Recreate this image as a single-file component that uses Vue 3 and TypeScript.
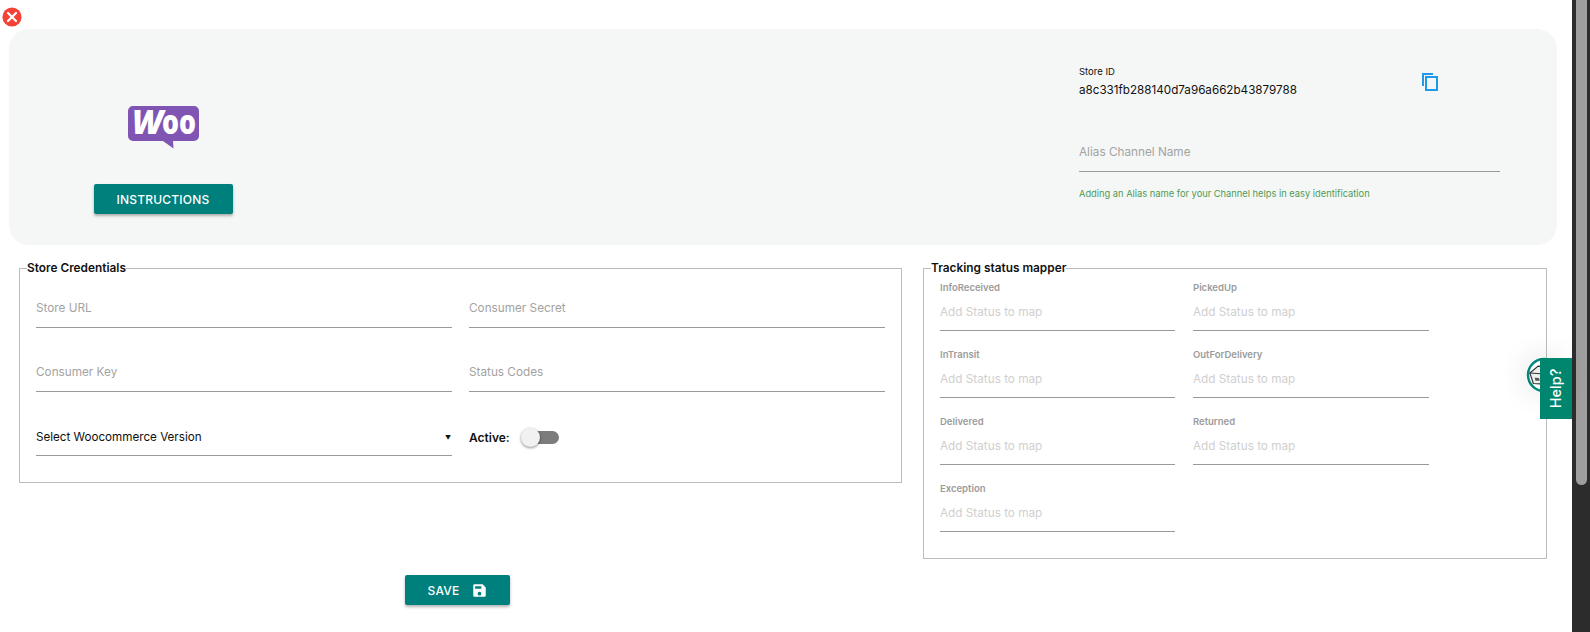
<script setup lang="ts">
const leftFields: string[] = ['Store URL', 'Consumer Secret', 'Consumer Key', 'Status Codes']
const statuses: string[] = ['InfoReceived', 'PickedUp', 'InTransit', 'OutForDelivery', 'Delivered', 'Returned', 'Exception']
</script>

<template>
  <div class="page">
    <main class="content">
      <svg class="close" viewBox="0 0 20 20" width="20" height="20" aria-label="Close">
        <circle cx="10" cy="10" r="9.6" fill="#f44336" />
        <path d="M6 6l8 8M14 6l-8 8" stroke="#fff" stroke-width="2.2" stroke-linecap="round" />
      </svg>

      <section class="card">
        <div class="brand">
          <svg class="logo" viewBox="0 0 71 43" width="71" height="43" aria-label="WooCommerce">
            <path d="M5 0h61a5 5 0 0 1 5 5v25a5 5 0 0 1-5 5H45l.5 7.500L35 35H5a5 5 0 0 1-5-5V5a5 5 0 0 1 5-5z" fill="#7f54b3" />
            <text x="4" y="28" textLength="31" lengthAdjust="spacingAndGlyphs" class="logo-text logo-w">W</text>
            <text x="34" y="28" textLength="34" lengthAdjust="spacingAndGlyphs" class="logo-text">oo</text>
          </svg>
          <button class="btn btn-instructions" type="button">INSTRUCTIONS</button>
        </div>
        <div class="store">
          <div class="store-top">
            <div>
              <div class="store-label">Store ID</div>
              <div class="store-id">a8c331fb288140d7a96a662b43879788</div>
            </div>
            <svg class="copy" viewBox="0 0 16 18" width="16" height="18" aria-label="Copy">
              <path d="M1 13V1h10" fill="none" stroke="#1e9ae8" stroke-width="2" />
              <rect x="4" y="4" width="11" height="13" fill="none" stroke="#1e9ae8" stroke-width="2" />
            </svg>
          </div>
          <input class="field alias" placeholder="Alias Channel Name" />
          <div class="hint">Adding an Alias name for your Channel helps in easy identification</div>
        </div>
      </section>

      <div class="columns">
        <div class="left-col">
          <fieldset class="box creds">
            <legend>Store Credentials</legend>
            <div class="creds-grid">
              <input v-for="f in leftFields" :key="f" class="field" :placeholder="f" />
              <div class="select">
                <span>Select Woocommerce Version</span>
                <span class="arrow">▼</span>
              </div>
              <div class="active">
                <span>Active:</span>
                <span class="switch"><span class="knob"></span></span>
              </div>
            </div>
          </fieldset>
        </div>
        <fieldset class="box mapper">
          <legend>Tracking status mapper</legend>
          <div class="mapper-grid">
            <label v-for="s in statuses" :key="s" class="status">
              <span class="status-label">{{ s }}</span>
              <input class="field status-input" placeholder="Add Status to map" />
            </label>
          </div>
        </fieldset>
      </div>

      <div class="save-row">
        <button class="btn btn-save" type="button">
          SAVE
          <svg viewBox="0 0 24 24" width="15" height="15" aria-hidden="true">
            <path fill="#fff" d="M17 2H4a2 2 0 0 0-2 2v16a2 2 0 0 0 2 2h16a2 2 0 0 0 2-2V7l-5-5zm-5 18a3 3 0 1 1 0-6 3 3 0 0 1 0 6zm3-11H5V5h10v4z" />
          </svg>
        </button>
      </div>

      <div class="help-badge">
        <svg viewBox="0 0 36 36" width="36" height="36" aria-hidden="true">
          <circle cx="18" cy="18" r="16" fill="#fff" stroke="#00897b" stroke-width="2.500" />
          <g transform="rotate(-18 14 18)">
            <path d="M5 13l10-4 10 4v11l-10 4-10-4z" fill="#eee" stroke="#333" stroke-width="1.200" />
            <path d="M5 13l10 4 10-4M15 17v11" fill="none" stroke="#333" stroke-width="1.200" />
            <path d="M8 19l4 1.500v3l-4-1.500z" fill="#555" />
          </g>
        </svg>
      </div>
      <div class="help"><span>Help?</span></div>
    </main>
    <aside class="scrollbar"><div class="thumb"></div></aside>
  </div>
</template>

<style>
html, body { margin: 0; background: #fff; overflow: hidden; }
</style>

<style scoped>
.page {
  display: flex;
  width: 1590px;
  height: 632px;
  overflow: hidden;
  font-family: Inter, "Liberation Sans", sans-serif;
  color: #111;
}
.content {
  position: relative;
  flex: 1;
  min-width: 0;
  padding: 29px 0 0 9px;
  box-sizing: border-box;
}
.close { position: absolute; left: 2px; top: 7px; }
.scrollbar {
  width: 18px;
  background: #2c2c2c;
  display: flex;
  justify-content: center;
}
.thumb {
  width: 11px;
  height: 485px;
  background: #9e9e9e;
  border-radius: 0 0 6px 6px;
}
.card {
  width: 1548px;
  height: 216px;
  background: #f5f7f6;
  border-radius: 20px;
  display: flex;
  box-sizing: border-box;
}
.brand {
  width: 308px;
  display: flex;
  flex-direction: column;
  align-items: center;
  padding-top: 77px;
  box-sizing: border-box;
}
.logo { overflow: visible; }
.logo-text {
  font-family: "Open Sans", sans-serif;
  font-weight: 800;
  font-size: 33px;
  fill: #fff;
}
.logo-w { font-style: italic; }
.btn {
  border: 0;
  border-radius: 2px;
  background: #00807d;
  color: #fff;
  font-family: Inter, sans-serif;
  font-weight: 500;
  font-size: 12px;
  letter-spacing: 0.2px;
  box-shadow: 0 2px 3px rgba(0, 0, 0, 0.3);
  display: flex;
  align-items: center;
  justify-content: center;
}
.btn-instructions {
  width: 139px;
  height: 30px;
  margin-top: 35px;
}
.store {
  margin-left: 762px;
  width: 421px;
  padding-top: 37px;
}
.store-top {
  display: flex;
  justify-content: space-between;
  width: 359px;
  height: 42px;
}
.store-label { font-size: 9.500px; line-height: 12px; }
.store-id { font-size: 11.670px; line-height: 15px; margin-top: 5px; }
.copy { margin-top: 7px; }
.field {
  display: block;
  width: 100%;
  box-sizing: border-box;
  height: 41px;
  border: 0;
  border-bottom: 1px solid #9a9a9a;
  outline: 0;
  padding: 1px 0 0;
  background: transparent;
  font-family: Inter, sans-serif;
  font-size: 11.750px;
  color: #111;
}
.field::placeholder { color: #a3a3a3; opacity: 1; }
.alias { margin-top: 21px; height: 43px; padding-top: 4px; }
.hint {
  margin-top: 16px;
  font-size: 9.300px;
  line-height: 12px;
  color: #4f9a55;
}
.columns {
  display: flex;
  align-items: flex-start;
  margin-top: 16px;
  padding-left: 10px;
}
.left-col { width: 883px; flex: none; }
.box {
  margin: 0;
  border: 1px solid #bcbcbc;
  padding: 0;
  box-sizing: border-box;
}
.box legend {
  margin-left: 7px;
  padding: 0;
  font-size: 11.850px;
  font-weight: 600;
  line-height: 14px;
  color: #111;
}
.creds { width: 883px; height: 222px; }
.creds-grid {
  display: grid;
  grid-template-columns: 416px 416px;
  column-gap: 17px;
  row-gap: 23px;
  padding: 12px 0 0 16px;
}
.select {
  height: 41px;
  box-sizing: border-box;
  border-bottom: 1px solid #9a9a9a;
  display: flex;
  justify-content: space-between;
  align-items: center;
  padding: 3px 1px 0 0;
  font-size: 11.650px;
}
.arrow { font-size: 6px; margin-top: 2px; }
.active {
  display: flex;
  align-items: center;
  height: 41px;
  padding-top: 3px;
  box-sizing: border-box;
  font-size: 12px;
  font-weight: 600;
}
.switch {
  position: relative;
  width: 35px;
  height: 13px;
  margin-left: 14px;
  background: #7c7c7c;
  border-radius: 7px;
}
.knob {
  position: absolute;
  left: -3px;
  top: -3px;
  width: 19px;
  height: 19px;
  border-radius: 50%;
  background: #f1f1f1;
  box-shadow: 0 1px 3px rgba(0, 0, 0, 0.45);
}
.mapper {
  width: 624px;
  height: 298px;
  margin-left: 21px;
  flex: none;
}
.mapper-grid {
  display: grid;
  grid-template-columns: 235px 236px;
  column-gap: 18px;
  row-gap: 18px;
  padding: 7px 0 0 16px;
}
.status { display: block; }
.status-label {
  display: block;
  font-size: 9.500px;
  font-weight: 600;
  line-height: 12px;
  color: #9b9b9b;
}
.status-input { height: 37px; padding: 0; }
.status-input::placeholder { color: #cfcfcf; }
.save-row {
  margin-top: 16px;
  padding-left: 396px;
}
.btn-save {
  width: 105px;
  height: 30px;
  gap: 13px;
  padding-bottom: 1px;
}
.help-badge {
  position: absolute;
  left: 1526px;
  top: 357px;
  width: 36px;
  height: 36px;
  border-radius: 50%;
  box-shadow: 0 0 30px rgba(0, 0, 0, 0.12);
}
.help-badge svg { display: block; }
.help {
  position: absolute;
  left: 1540px;
  top: 358px;
  width: 32px;
  height: 61px;
  background: #00856f;
  color: #fff;
  display: flex;
  align-items: center;
  justify-content: center;
}
.help span {
  display: block;
  transform: rotate(-90deg);
  white-space: nowrap;
  font-family: Inter, sans-serif;
  font-weight: 500;
  font-size: 14.500px;
}
</style>
